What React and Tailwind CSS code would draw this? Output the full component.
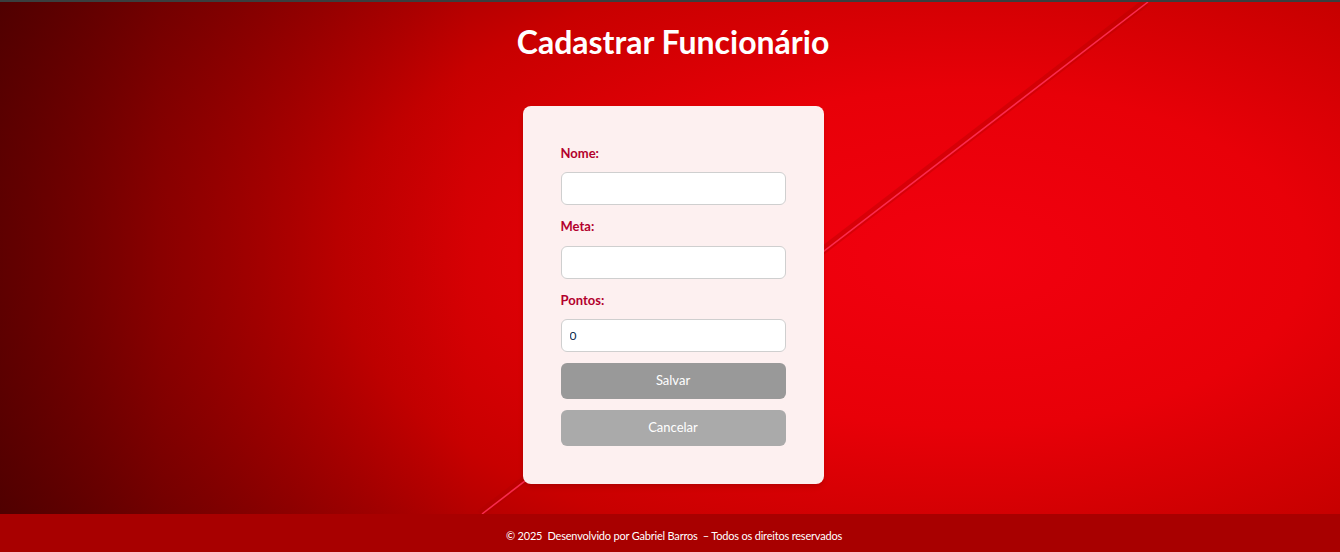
import React from 'react';

export default function App() {
	return (
		<div className="flex min-h-screen flex-col bg-[#3a3f3f] pt-[2px] font-['Open_Sans',sans-serif]">
			<main className="relative flex flex-1 flex-col items-center overflow-hidden pl-[6px] bg-[linear-gradient(90deg,rgba(50,0,0,0.45)_0%,rgba(60,0,0,0.25)_12%,rgba(0,0,0,0)_35%),radial-gradient(ellipse_85%_110%_at_72%_50%,#f2000f_0%,#e80008_30%,#c80000_55%,#920000_78%,#600000_100%)]">
				<svg
					className="pointer-events-none absolute inset-0 h-full w-full"
					viewBox="0 0 1340 512"
					preserveAspectRatio="none"
				>
					<line x1="1146" y1="0" x2="480" y2="512" stroke="#b00000" strokeOpacity="0.35" strokeWidth="8" />
					<line x1="1148" y1="0" x2="482" y2="512" stroke="#ff2f55" strokeOpacity="0.9" strokeWidth="1.5" />
				</svg>
				<h1 className="relative mt-[20px] font-['Lato',sans-serif] text-[32px] leading-[40px] font-bold text-white">
					Cadastrar Funcionário
				</h1>
				<form className="relative mt-[44px] mb-[30px] flex w-[301px] flex-col rounded-lg bg-[#fdf0f0] px-[38px] pt-[39px] pb-[38px] font-['Lato',sans-serif] shadow-md">
					<label className="text-[13px] leading-[16px] font-bold text-[#b3002d]">Nome:</label>
					<input className="mt-[11px] h-[33px] rounded-md border border-[#cfcfcf] bg-white px-2 text-[12px] outline-none" />
					<label className="mt-[13px] text-[13px] leading-[16px] font-bold text-[#b3002d]">Meta:</label>
					<input className="mt-[12px] h-[33px] rounded-md border border-[#cfcfcf] bg-white px-2 text-[12px] outline-none" />
					<label className="mt-[13px] text-[13px] leading-[16px] font-bold text-[#b3002d]">Pontos:</label>
					<input
						defaultValue="0"
						className="mt-[11px] h-[33px] rounded-md border border-[#cfcfcf] bg-white px-2 text-[12px] text-[#0a2a4a] outline-none"
					/>
					<button type="button" className="mt-[11px] h-[36px] rounded-md bg-[#999999] text-[13px] text-white">
						Salvar
					</button>
					<button type="button" className="mt-[11px] h-[36px] rounded-md bg-[#aaaaaa] text-[13px] text-white">
						Cancelar
					</button>
				</form>
			</main>
			<footer className="flex h-[38px] items-center justify-center bg-[#a80000] pt-[6px] pl-[8px] font-['Lato',sans-serif] text-[11px] tracking-[-0.2px] whitespace-pre text-white">
				© 2025  Desenvolvido por Gabriel Barros  – Todos os direitos reservados
			</footer>
		</div>
	);
}
